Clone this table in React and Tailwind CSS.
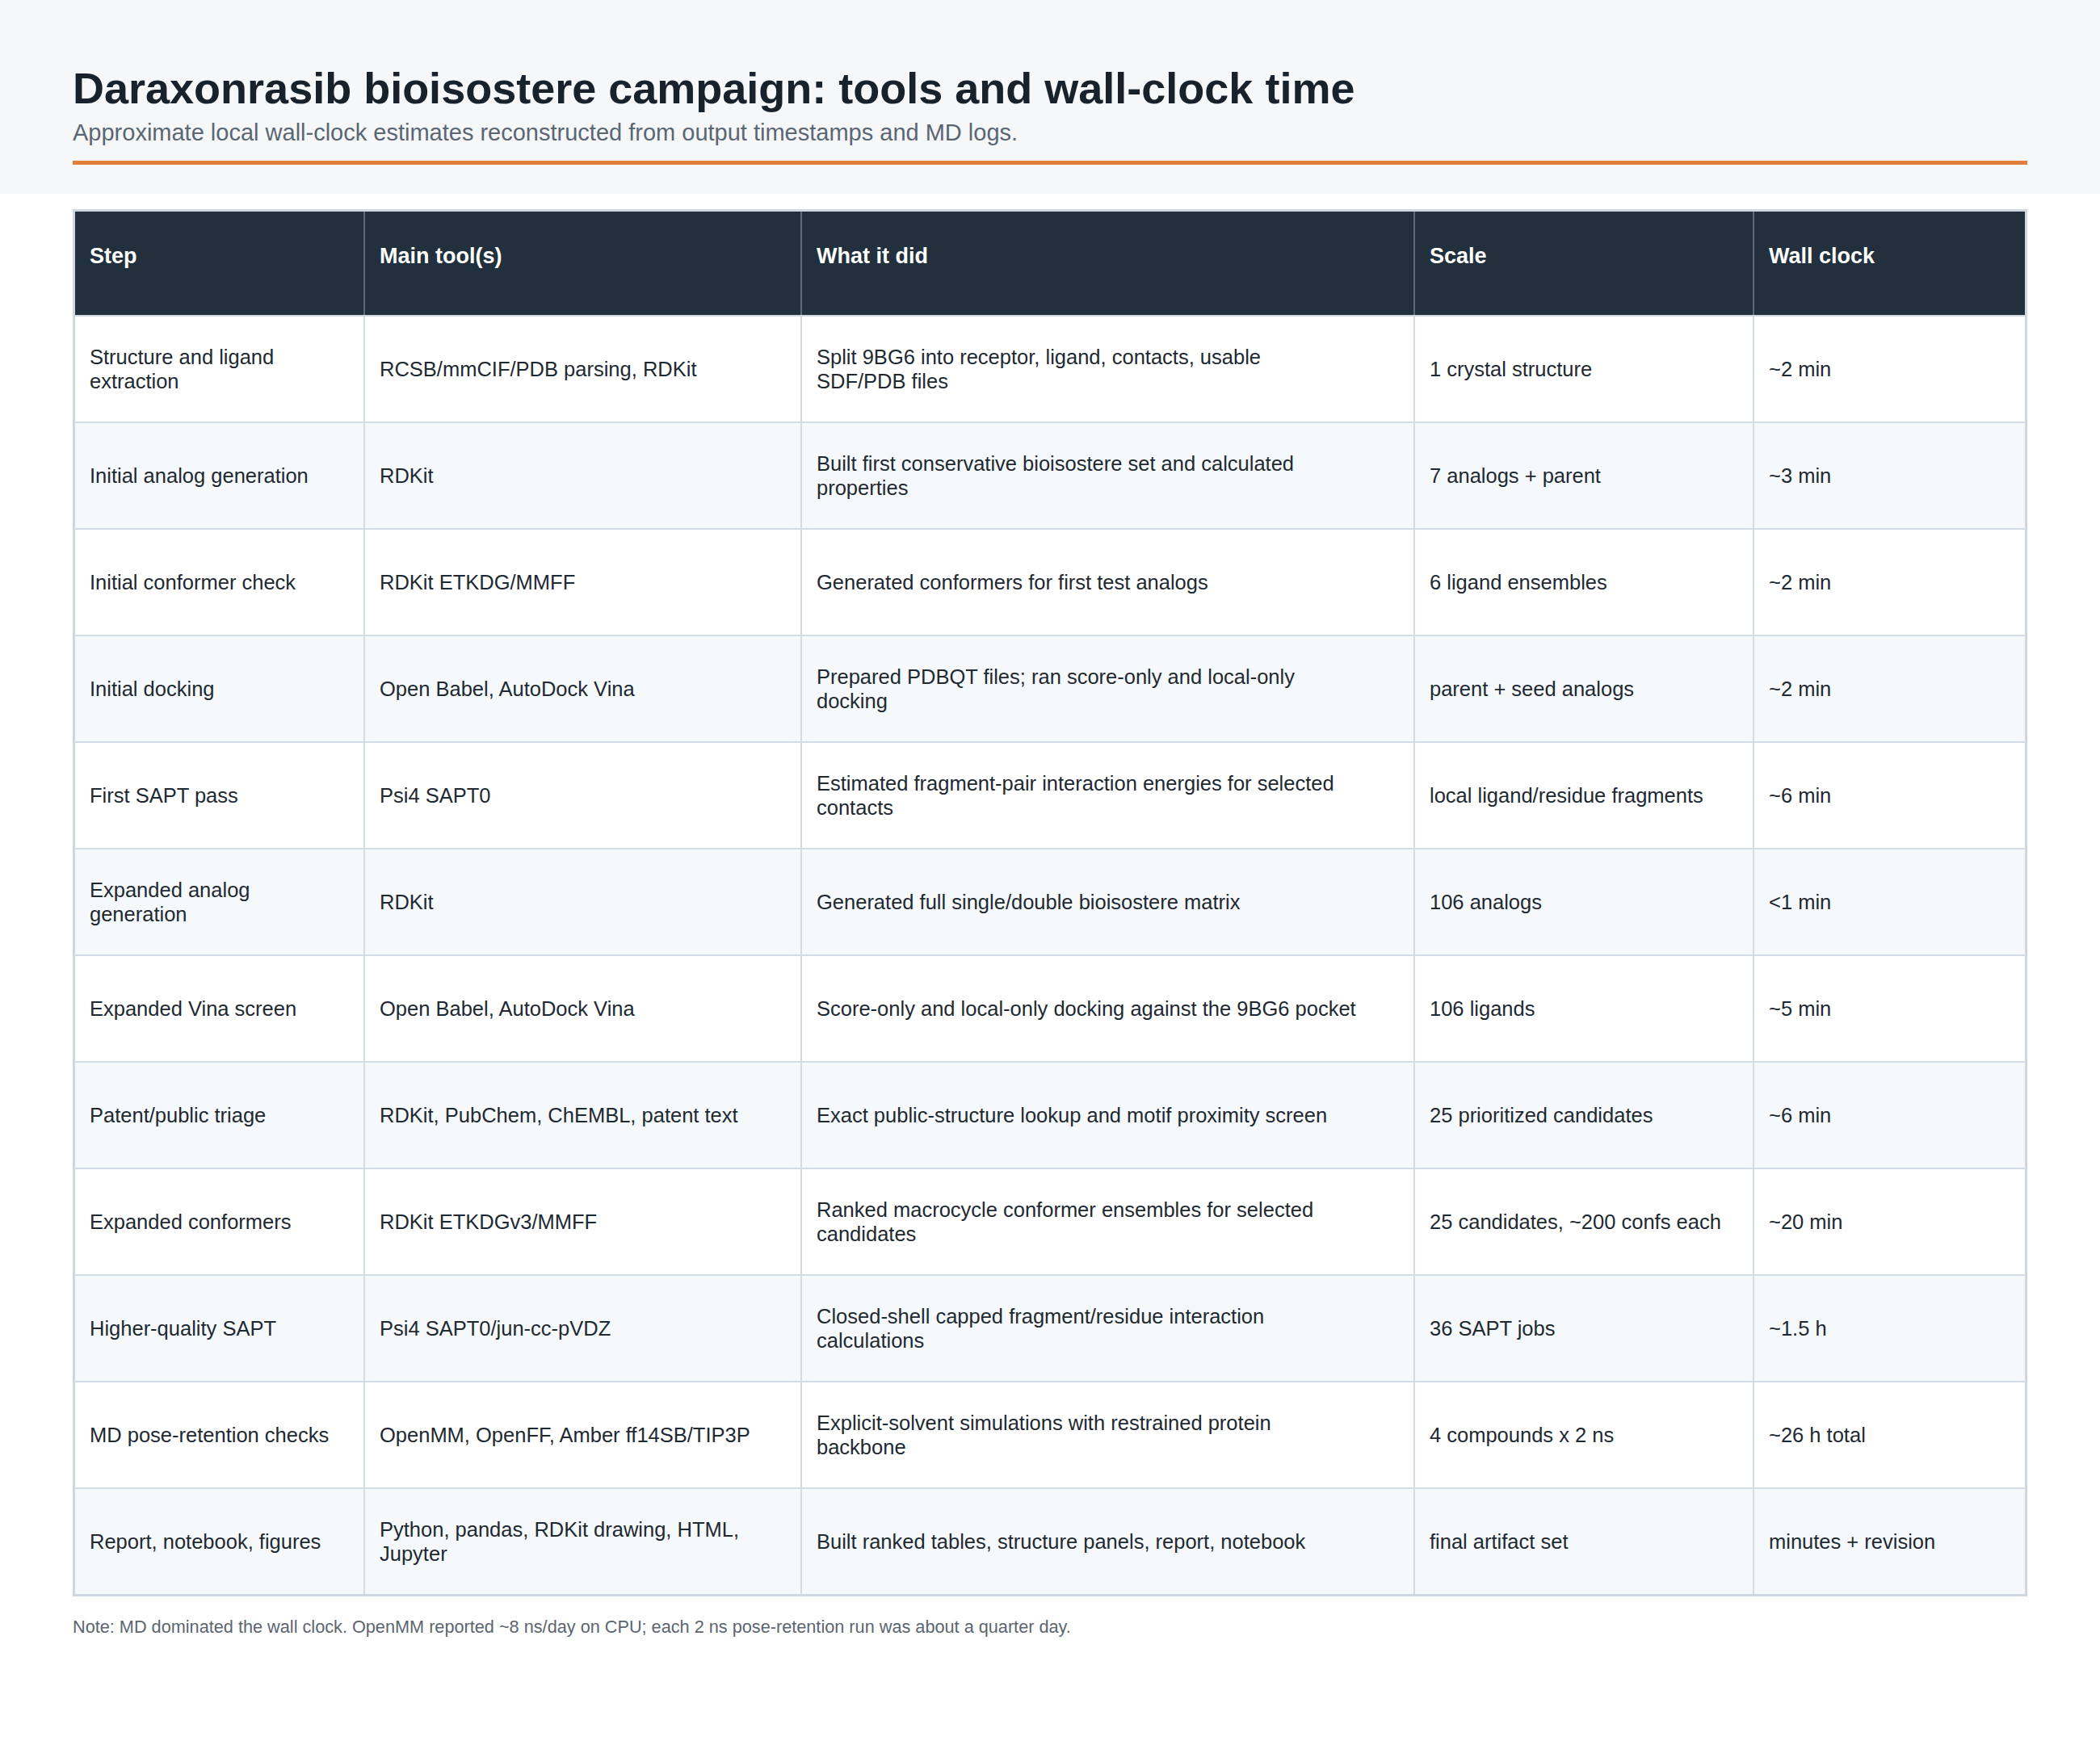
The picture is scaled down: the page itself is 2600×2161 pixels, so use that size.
const rows = [
  {
    step: ["Structure and ligand", "extraction"],
    tool: ["RCSB/mmCIF/PDB parsing, RDKit"],
    did: ["Split 9BG6 into receptor, ligand, contacts, usable", "SDF/PDB files"],
    scale: ["1 crystal structure"],
    time: "~2 min",
  },
  {
    step: ["Initial analog generation"],
    tool: ["RDKit"],
    did: ["Built first conservative bioisostere set and calculated", "properties"],
    scale: ["7 analogs + parent"],
    time: "~3 min",
  },
  {
    step: ["Initial conformer check"],
    tool: ["RDKit ETKDG/MMFF"],
    did: ["Generated conformers for first test analogs"],
    scale: ["6 ligand ensembles"],
    time: "~2 min",
  },
  {
    step: ["Initial docking"],
    tool: ["Open Babel, AutoDock Vina"],
    did: ["Prepared PDBQT files; ran score-only and local-only", "docking"],
    scale: ["parent + seed analogs"],
    time: "~2 min",
  },
  {
    step: ["First SAPT pass"],
    tool: ["Psi4 SAPT0"],
    did: ["Estimated fragment-pair interaction energies for selected", "contacts"],
    scale: ["local ligand/residue fragments"],
    time: "~6 min",
  },
  {
    step: ["Expanded analog", "generation"],
    tool: ["RDKit"],
    did: ["Generated full single/double bioisostere matrix"],
    scale: ["106 analogs"],
    time: "<1 min",
  },
  {
    step: ["Expanded Vina screen"],
    tool: ["Open Babel, AutoDock Vina"],
    did: ["Score-only and local-only docking against the 9BG6 pocket"],
    scale: ["106 ligands"],
    time: "~5 min",
  },
  {
    step: ["Patent/public triage"],
    tool: ["RDKit, PubChem, ChEMBL, patent text"],
    did: ["Exact public-structure lookup and motif proximity screen"],
    scale: ["25 prioritized candidates"],
    time: "~6 min",
  },
  {
    step: ["Expanded conformers"],
    tool: ["RDKit ETKDGv3/MMFF"],
    did: ["Ranked macrocycle conformer ensembles for selected", "candidates"],
    scale: ["25 candidates, ~200 confs each"],
    time: "~20 min",
  },
  {
    step: ["Higher-quality SAPT"],
    tool: ["Psi4 SAPT0/jun-cc-pVDZ"],
    did: ["Closed-shell capped fragment/residue interaction", "calculations"],
    scale: ["36 SAPT jobs"],
    time: "~1.5 h",
  },
  {
    step: ["MD pose-retention checks"],
    tool: ["OpenMM, OpenFF, Amber ff14SB/TIP3P"],
    did: ["Explicit-solvent simulations with restrained protein", "backbone"],
    scale: ["4 compounds x 2 ns"],
    time: "~26 h total",
  },
  {
    step: ["Report, notebook, figures"],
    tool: ["Python, pandas, RDKit drawing, HTML,", "Jupyter"],
    did: ["Built ranked tables, structure panels, report, notebook"],
    scale: ["final artifact set"],
    time: "minutes + revision",
  },
];

const headers = ["Step", "Main tool(s)", "What it did", "Scale", "Wall clock"];

const Lines = ({ lines }) => (
  <div className="whitespace-nowrap">
    {lines.map((l, i) => (
      <div key={i}>{l}</div>
    ))}
  </div>
);

const Cell = ({ children, last }) => (
  <div
    className={
      "flex items-center px-[18px] " + (last ? "" : "border-r-2 border-[#d3dce4]")
    }
  >
    {children}
  </div>
);

export default function App() {
  return (
    <div
      className="min-h-screen bg-white"
      style={{ fontFamily: '"Liberation Sans", Arial, sans-serif' }}
    >
      <div className="bg-[#f6f7f9] px-[90px] pt-[77px] pb-[36px]">
        <h1 className="text-[54px] leading-[65px] font-bold text-[#17222c]">
          Daraxonrasib bioisostere campaign: tools and wall-clock time
        </h1>
        <p className="mt-[5px] text-[29px] leading-[35px] text-[#5b6673]">
          Approximate local wall-clock estimates reconstructed from output timestamps and MD logs.
        </p>
        <div className="mt-[17px] h-[5px] bg-[#e37f3c]" />
      </div>

      <div className="px-[90px] pt-[19px]">
        <div className="border-[3px] border-[#cfd8e0] text-[25.5px] leading-[30px] text-[#1e2932]">
          <div className="grid grid-cols-[359px_541px_759px_420px_1fr] h-[130px] bg-[#21303c] border-b-2 border-[#cfd8e0]">
            {headers.map((h, i) => (
              <div
                key={h}
                className={
                  "px-[18px] pt-[40px] text-[27px] font-bold text-white " +
                  (i < headers.length - 1 ? "border-r-2 border-[#5b6a76]" : "")
                }
              >
                {h}
              </div>
            ))}
          </div>
          {rows.map((r, i) => (
            <div
              key={i}
              className={
                "grid grid-cols-[359px_541px_759px_420px_1fr] " +
                (i % 2 === 1 ? "bg-[#f6f9fb] " : "bg-white ") +
                (i < rows.length - 1 ? "h-[132px] border-b-2 border-[#d3dce4]" : "h-[130px]")
              }
            >
              <Cell>
                <Lines lines={r.step} />
              </Cell>
              <Cell>
                <Lines lines={r.tool} />
              </Cell>
              <Cell>
                <Lines lines={r.did} />
              </Cell>
              <Cell>
                <Lines lines={r.scale} />
              </Cell>
              <Cell last>
                <Lines lines={[r.time]} />
              </Cell>
            </div>
          ))}
        </div>
        <p className="mt-[23px] text-[21.7px] leading-[30px] text-[#5b6570]">
          Note: MD dominated the wall clock. OpenMM reported ~8 ns/day on CPU; each 2 ns pose-retention run was about a quarter day.
        </p>
      </div>
    </div>
  );
}
